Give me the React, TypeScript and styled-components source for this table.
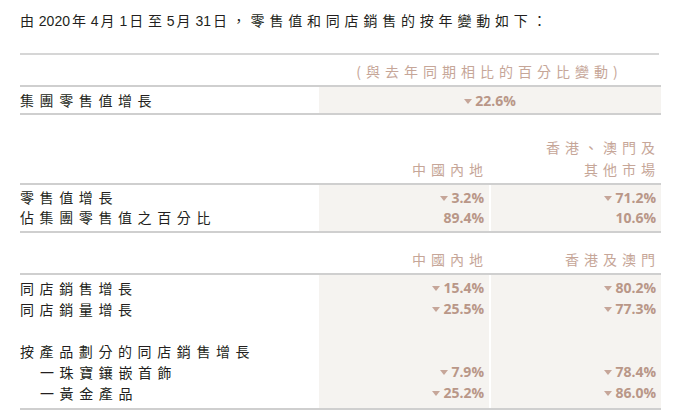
import styled, { createGlobalStyle } from "styled-components";

const GlobalStyle = createGlobalStyle`
  body {
    margin: 0;
    background: #ffffff;
    font-family: "Noto Sans CJK TC", sans-serif;
    color: #231f20;
  }
`;

const Page = styled.div`
  width: 692px;
  padding: 10px 0 0 20px;
  box-sizing: border-box;
`;

const Title = styled.p`
  margin: 0;
  font-family: "Noto Sans CJK TC", sans-serif;
  font-size: 14px;
  line-height: 20px;
  letter-spacing: 4.8px;
  color: #231f20;
`;

const Num = styled.span`
  font-family: "Liberation Sans", sans-serif;
  font-size: 14px;
  letter-spacing: 0;
  margin-right: 2px;
`;

const Section = styled.div`
  width: 639px;
  display: grid;
  grid-template-columns: 297px 170px 170px;
  column-gap: 2px;
`;

const TopRule = styled.div`
  width: 639px;
  height: 0;
  border-top: 2px solid #d6d6d6;
  margin-top: 22px;
`;

const HeadRow = styled.div<{ $h: number }>`
  grid-column: 1 / -1;
  display: grid;
  grid-template-columns: 297px 170px 170px;
  column-gap: 2px;
  height: ${(p) => p.$h}px;
  align-items: end;
  border-bottom: 2px solid #cfcfcf;
  box-sizing: border-box;
`;

const HeadText = styled.div<{ $span?: boolean }>`
  grid-column: ${(p) => (p.$span ? "2 / 4" : "auto")};
  text-align: ${(p) => (p.$span ? "center" : "right")};
  font-family: "Noto Sans CJK TC", sans-serif;
  font-size: 14px;
  line-height: 22px;
  letter-spacing: 5px;
  color: #c6a698;
  padding: 0 1px 3px 0;
`;

const Body = styled.div`
  grid-column: 1 / -1;
  display: grid;
  grid-template-columns: 297px 170px 170px;
  column-gap: 2px;
  border-bottom: 2px solid #cfcfcf;
`;

const Label = styled.div<{ $indent?: boolean }>`
  font-family: "Noto Sans CJK TC", sans-serif;
  font-size: 14px;
  letter-spacing: 5.6px;
  color: #231f20;
  display: flex;
  align-items: center;
  padding-left: ${(p) => (p.$indent ? "20px" : "0")};
  white-space: nowrap;
`;

const Cell = styled.div<{ $h: number; $span?: boolean; $pt?: number; $pb?: number }>`
  grid-column: ${(p) => (p.$span ? "2 / 4" : "auto")};
  background: #f5f3f0;
  height: ${(p) => p.$h}px;
  padding-top: ${(p) => p.$pt ?? 0}px;
  padding-bottom: ${(p) => p.$pb ?? 0}px;
  display: flex;
  align-items: center;
  justify-content: ${(p) => (p.$span ? "center" : "flex-end")};
  padding-right: ${(p) => (p.$span ? "0" : "5px")};
  font-family: "Liberation Sans Narrow", "Open Sans", sans-serif;
  font-weight: 700;
  font-size: 14px;
  color: #b99788;
`;

const Down = styled.span`
  display: inline-block;
  width: 0;
  height: 0;
  border-left: 4px solid transparent;
  border-right: 4px solid transparent;
  border-top: 5px solid #c6a699;
  margin-right: 3px;
  margin-top: 2px;
`;

const Spacer = styled.div<{ $h: number }>`
  height: ${(p) => p.$h}px;
`;

type Row = { label: string; a: string; b?: string; down?: boolean; indent?: boolean };

function Value({ v, down }: { v: string; down?: boolean }) {
  return (
    <>
      {down && <Down />}
      {v}
    </>
  );
}

function Rows({ rows, h, first, last }: { rows: (Row | null)[]; h: number; first: number; last: number }) {
  return (
    <Body>
      {rows.map((r, i) => {
        const pt = i === 0 ? first : 0;
        const pb = i === rows.length - 1 ? last : 0;
        if (!r) {
          return [
            <Spacer key={`s${i}`} $h={h} />,
            <Cell key={`a${i}`} $h={h} />,
            <Cell key={`b${i}`} $h={h} />,
          ];
        }
        return [
          <Label key={`l${i}`} $indent={r.indent} style={{ paddingTop: pt, paddingBottom: pb }}>
            {r.label}
          </Label>,
          <Cell key={`a${i}`} $h={h} $pt={pt} $pb={pb}>
            {r.a && <Value v={r.a} down={r.down} />}
          </Cell>,
          <Cell key={`b${i}`} $h={h} $pt={pt} $pb={pb}>
            {r.b && <Value v={r.b} down={r.down} />}
          </Cell>,
        ];
      })}
    </Body>
  );
}

export default function App() {
  return (
    <Page>
      <GlobalStyle />
      <Title>
        由<Num>2020</Num>年<Num>4</Num>月<Num>1</Num>日至<Num>5</Num>月<Num>31</Num>日，零售值和同店銷售的按年變動如下：
      </Title>

      <TopRule />
      <Section>
        <HeadRow $h={32}>
          <div />
          <HeadText $span>(與去年同期相比的百分比變動)</HeadText>
        </HeadRow>
        <Body>
          <Label>集團零售值增長</Label>
          <Cell $h={26} $span>
            <Value v="22.6%" down />
          </Cell>
        </Body>
      </Section>

      <Section>
        <HeadRow $h={70}>
          <div />
          <HeadText>中國內地</HeadText>
          <HeadText>
            香港、澳門及
            <br />
            其他市場
          </HeadText>
        </HeadRow>
        <Rows
          h={20}
          first={2}
          last={4}
          rows={[
            { label: "零售值增長", a: "3.2%", b: "71.2%", down: true },
            { label: "佔集團零售值之百分比", a: "89.4%", b: "10.6%" },
          ]}
        />
      </Section>

      <Section>
        <HeadRow $h={42}>
          <div />
          <HeadText>中國內地</HeadText>
          <HeadText>香港及澳門</HeadText>
        </HeadRow>
        <Rows
          h={21}
          first={2}
          last={5}
          rows={[
            { label: "同店銷售增長", a: "15.4%", b: "80.2%", down: true },
            { label: "同店銷量增長", a: "25.5%", b: "77.3%", down: true },
            null,
            { label: "按產品劃分的同店銷售增長", a: "", b: "" },
            { label: "一珠寶鑲嵌首飾", a: "7.9%", b: "78.4%", down: true, indent: true },
            { label: "一黃金產品", a: "25.2%", b: "86.0%", down: true, indent: true },
          ]}
        />
      </Section>
    </Page>
  );
}
